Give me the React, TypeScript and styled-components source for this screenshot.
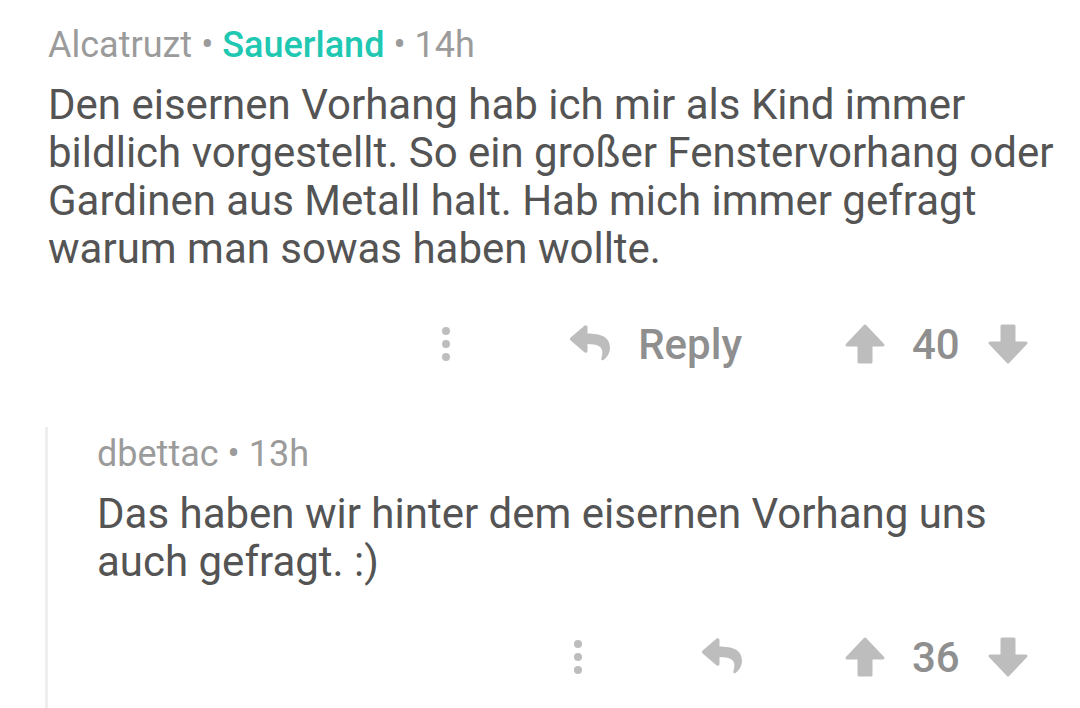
import React from 'react';
import styled, { createGlobalStyle } from 'styled-components';

const GlobalStyle = createGlobalStyle`
  html, body {
    margin: 0;
    padding: 0;
    background: #ffffff;
  }
  body {
    font-family: Roboto, 'Liberation Sans', sans-serif;
    overflow: hidden;
  }
`;

const Page = styled.main`
  width: 1080px;
  height: 708px;
  overflow: hidden;
  background: #fff;
`;

const Comment = styled.article<{ $nested?: boolean }>`
  padding: ${p => (p.$nested ? '7px 16px 40px 49px' : '25px 16px 0 48px')};
  margin-left: ${p => (p.$nested ? '45px' : '0')};
  margin-top: ${p => (p.$nested ? '53px' : '0')};
  border-left: ${p => (p.$nested ? '3px solid #eeeeee' : 'none')};
`;

const Meta = styled.div`
  font-size: 36px;
  line-height: 40px;
  color: #9b9b9b;
  margin-bottom: 16px;
  white-space: nowrap;
`;

const Flair = styled.span`
  color: #20c8b2;
  font-weight: 500;
`;

const Dot = styled.span`
  margin: 0 9px;
`;

const Body = styled.p`
  margin: 0;
  font-size: 42px;
  line-height: 48px;
  color: #545454;
`;

const Actions = styled.div`
  display: flex;
  justify-content: flex-end;
  align-items: center;
  height: 60px;
  margin-top: 41px;
  padding-right: 36px;
`;

const More = styled.button`
  display: flex;
  flex-direction: column;
  gap: 5px;
  align-items: center;
  border: none;
  background: none;
  padding: 0;
  margin-right: 120px;
  span {
    width: 8px;
    height: 8px;
    border-radius: 50%;
    background: #bdbdbd;
  }
`;

const ReplyButton = styled.button`
  display: flex;
  align-items: center;
  gap: 28px;
  border: none;
  background: none;
  padding: 0;
  margin-right: 103px;
  font-family: Roboto, 'Liberation Sans', sans-serif;
  font-size: 42px;
  font-weight: 500;
  color: #8f8f8f;
`;

const Votes = styled.div`
  display: flex;
  align-items: center;
`;

const Score = styled.span`
  font-size: 42px;
  font-weight: 500;
  color: #8f8f8f;
  width: 46px;
  margin: 0 30px 0 27px;
  text-align: center;
`;

const ReplyIcon = () => (
  <svg width="40" height="38" viewBox="0 0 512 480" fill="#bdbdbd">
    <path d="M8.3 157.8L184.3 5.9C199.7-7.5 224 3.3 224 24v80c160.6 1.8 288 34 288 186.3 0 61.4-39.6 122.3-83.3 154.1-13.7 9.9-33.1-2.5-28.1-18.6 45.3-145-21.5-183.5-176.6-185.7V328c0 20.7-24.3 31.5-39.7 18.2l-176-152c-11.1-9.6-11.1-26.8 0-36.4z" />
  </svg>
);

const Arrow = ({ down }: { down?: boolean }) => (
  <svg
    width="40"
    height="40"
    viewBox="0 0 40 40"
    style={down ? { transform: 'rotate(180deg)' } : undefined}
  >
    <path
      d="M20 2 L38 21 H26 V38 H14 V21 H2 Z"
      fill="#bdbdbd"
      stroke="#bdbdbd"
      strokeWidth="3"
      strokeLinejoin="round"
    />
  </svg>
);

const ActionRow = ({ score, label }: { score: number; label?: string }) => (
  <Actions>
    <More aria-label="more">
      <span />
      <span />
      <span />
    </More>
    <ReplyButton>
      <ReplyIcon />
      {label}
    </ReplyButton>
    <Votes>
      <Arrow />
      <Score>{score}</Score>
      <Arrow down />
    </Votes>
  </Actions>
);

export default function App() {
  return (
    <Page>
      <GlobalStyle />
      <Comment>
        <Meta>
          Alcatruzt<Dot>•</Dot>
          <Flair>Sauerland</Flair>
          <Dot>•</Dot>14h
        </Meta>
        <Body>
          Den eisernen Vorhang hab ich mir als Kind immer bildlich vorgestellt. So ein großer
          Fenstervorhang oder Gardinen aus Metall halt. Hab mich immer gefragt warum man sowas
          haben wollte.
        </Body>
        <ActionRow score={40} label="Reply" />
      </Comment>
      <Comment $nested>
        <Meta>
          dbettac<Dot>•</Dot>13h
        </Meta>
        <Body>Das haben wir hinter dem eisernen Vorhang uns auch gefragt. :)</Body>
        <ActionRow score={36} />
      </Comment>
    </Page>
  );
}
